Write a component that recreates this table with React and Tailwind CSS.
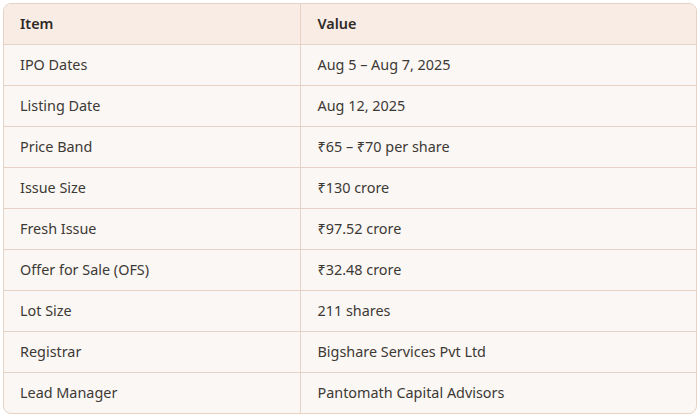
const rows = [
  ['IPO Dates', 'Aug 5 – Aug 7, 2025'],
  ['Listing Date', 'Aug 12, 2025'],
  ['Price Band', '₹65 – ₹70 per share'],
  ['Issue Size', '₹130 crore'],
  ['Fresh Issue', '₹97.52 crore'],
  ['Offer for Sale (OFS)', '₹32.48 crore'],
  ['Lot Size', '211 shares'],
  ['Registrar', 'Bigshare Services Pvt Ltd'],
  ['Lead Manager', 'Pantomath Capital Advisors'],
];

export default function App() {
  return (
    <div className="min-h-screen bg-white p-[3px] pr-[1px]" style={{ fontFamily: '"Noto Sans", Lato, sans-serif' }}>
      <div className="overflow-hidden rounded-lg border border-[#e6d3c6] bg-[#fbf7f4]">
        <table className="w-full border-collapse text-left text-[14.4px] text-[#3d3935]">
          <thead>
            <tr className="h-[40px] bg-[#f9ece4]">
              <th className="w-[296px] border-r border-[#e6d3c6] px-4 font-semibold text-[#2e2a27]">Item</th>
              <th className="pl-[17px] pr-4 font-semibold text-[#2e2a27]">Value</th>
            </tr>
          </thead>
          <tbody>
            {rows.map(([item, value]) => (
              <tr key={item} className="h-[41px] border-t border-[#e6d3c6]">
                <td className="border-r border-[#e6d3c6] px-4">{item}</td>
                <td className="pl-[17px] pr-4">{value}</td>
              </tr>
            ))}
          </tbody>
        </table>
      </div>
    </div>
  );
}
